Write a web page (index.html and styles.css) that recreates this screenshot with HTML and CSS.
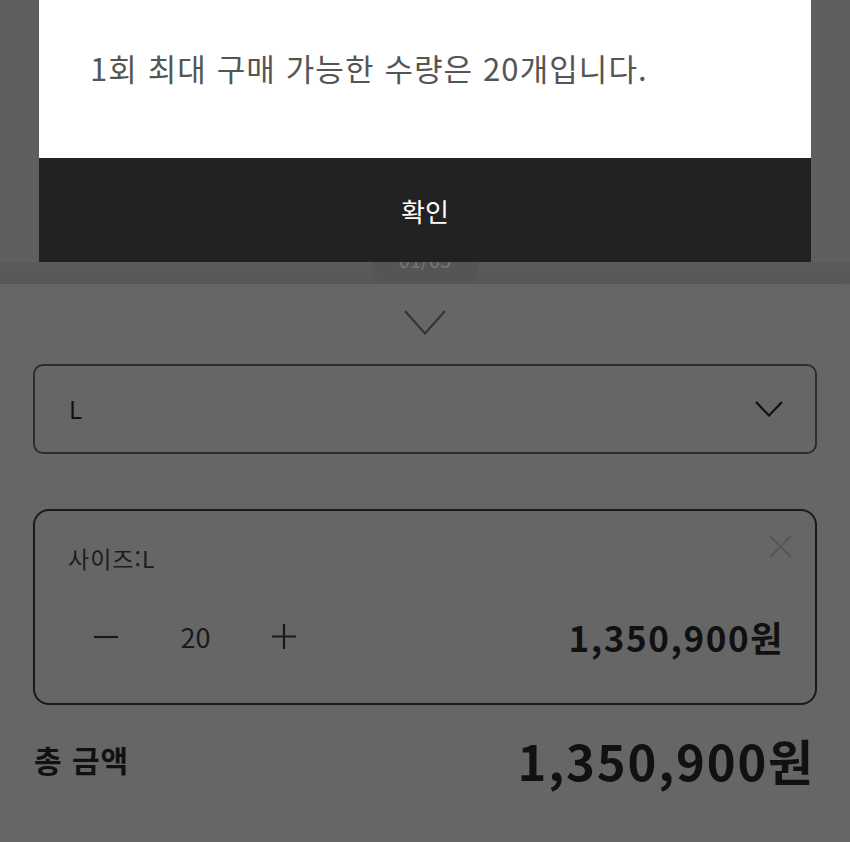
FILE: index.html
```html
<!DOCTYPE html>
<html lang="ko">
<head>
<meta charset="utf-8">
<title>구매 수량 안내</title>
<link rel="stylesheet" href="styles.css">
</head>
<body>
<div class="screen">
  <div class="top">
    <div class="pill">01/05</div>
  </div>
  <div class="sheet">
    <div class="handle">
      <svg width="42" height="25" viewBox="0 0 42 25"><polyline points="1,1 21,23.5 41,1" fill="none" stroke="#363636" stroke-width="2.2"/></svg>
    </div>
    <div class="select">
      <span class="select-value">L</span>
      <svg width="28" height="16" viewBox="0 0 28 16"><polyline points="1,1 14,14.5 27,1" fill="none" stroke="#111" stroke-width="2.2"/></svg>
    </div>
    <div class="item">
      <div class="item-head">
        <span class="item-name">사이즈:L</span>
        <svg class="item-close" width="23" height="23" viewBox="0 0 23 23"><path d="M1 1 L22 22 M22 1 L1 22" stroke="#565656" stroke-width="1.8" fill="none"/></svg>
      </div>
      <div class="item-row">
        <div class="stepper">
          <div class="step step-minus"><svg width="24" height="24" viewBox="0 0 24 24"><path d="M0 12 H24" stroke="#1a1a1a" stroke-width="2.2"/></svg></div>
          <div class="step step-num">20</div>
          <div class="step step-plus"><svg width="24" height="25" viewBox="0 0 24 25"><path d="M0 12.5 H24 M12 0 V25" stroke="#1a1a1a" stroke-width="2.2"/></svg></div>
        </div>
        <div class="price">1,350,900원</div>
      </div>
    </div>
    <div class="total">
      <span class="total-label">총 금액</span>
      <span class="total-price">1,350,900원</span>
    </div>
  </div>
  <div class="modal">
    <div class="modal-body">
      <p class="modal-text">1회 최대 구매 가능한 수량은 20개입니다.</p>
    </div>
    <div class="modal-btn">확인</div>
  </div>
</div>
</body>
</html>
```
FILE: styles.css
```css
* { box-sizing: border-box; }
html, body { margin: 0; padding: 0; }
body {
  width: 850px;
  height: 842px;
  overflow: hidden;
  background: #666;
  font-family: "Noto Sans CJK KR", "Noto Sans", sans-serif;
}
.screen {
  position: relative;
  width: 850px;
  height: 842px;
  display: flex;
  flex-direction: column;
}
.top {
  height: 284px;
  flex: none;
  display: flex;
  justify-content: center;
  align-items: flex-end;
  background: linear-gradient(#5f5f5f 0, #5f5f5f 262px, #5a5a5a 263px, #575757 284px);
}
.pill {
  width: 106px;
  height: 44px;
  margin-bottom: 1px;
  border-radius: 16px;
  background: #555;
  color: #777;
  font-size: 20px;
  line-height: 42px;
  text-align: center;
}
.sheet {
  flex: 1;
  background: #666;
  border-radius: 8px 8px 0 0;
  display: flex;
  flex-direction: column;
}
.handle {
  display: flex;
  justify-content: center;
  padding-top: 26px;
  height: 80px;
}
.select {
  margin: 0 33px;
  height: 90px;
  border: 2px solid #2e2d27;
  border-radius: 10px;
  display: flex;
  align-items: center;
  justify-content: space-between;
  padding: 0 32px 0 34px;
}
.select-value {
  font-size: 24px;
  color: #111;
  line-height: 30px;
}
.item {
  margin: 55px 33px 0;
  height: 196px;
  border: 2px solid #1a1a1a;
  border-radius: 16px;
  padding: 0 33px 0 33px;
  display: flex;
  flex-direction: column;
}
.item-head {
  display: flex;
  justify-content: space-between;
  align-items: flex-start;
  height: 89px;
}
.item-name {
  margin-top: 32px;
  font-size: 23px;
  line-height: 30px;
  letter-spacing: 1px;
  color: #1c1c1c;
}
.item-close {
  margin-top: 24px;
  margin-right: -10px;
}
.item-row {
  display: flex;
  justify-content: space-between;
  align-items: center;
}
.stepper {
  display: flex;
  height: 73px;
  border: 1px solid #696969;
}
.step {
  display: flex;
  align-items: center;
  justify-content: center;
  height: 100%;
}
.step-minus { width: 74px; }
.step-num {
  width: 105px;
  border-left: 1px solid #696969;
  border-right: 1px solid #696969;
  font-size: 27px;
  color: #1a1a1a;
}
.step-plus { width: 71px; }
.price {
  font-size: 35px;
  font-weight: 700;
  color: #111;
  letter-spacing: 1.6px;
  margin-right: -2px;
}
.total {
  margin-top: 24px;
  height: 60px;
  padding: 0 39px 0 34px;
  display: flex;
  justify-content: space-between;
  align-items: center;
}
.total-label {
  font-size: 30px;
  font-weight: 700;
  letter-spacing: 1px;
  color: #111;
}
.total-price {
  font-size: 49px;
  font-weight: 700;
  color: #111;
  letter-spacing: 1.8px;
  margin-right: -4px;
}
.modal {
  position: absolute;
  top: 0;
  left: 39px;
  width: 772px;
}
.modal-body {
  height: 158px;
  background: #fff;
  padding: 48px 0 0 51px;
}
.modal-text {
  margin: 0;
  font-size: 31px;
  line-height: 40px;
  letter-spacing: 1.1px;
  color: #555;
}
.modal-btn {
  height: 104px;
  background: #222;
  color: #fff;
  font-size: 26px;
  display: flex;
  align-items: center;
  justify-content: center;
}
```
